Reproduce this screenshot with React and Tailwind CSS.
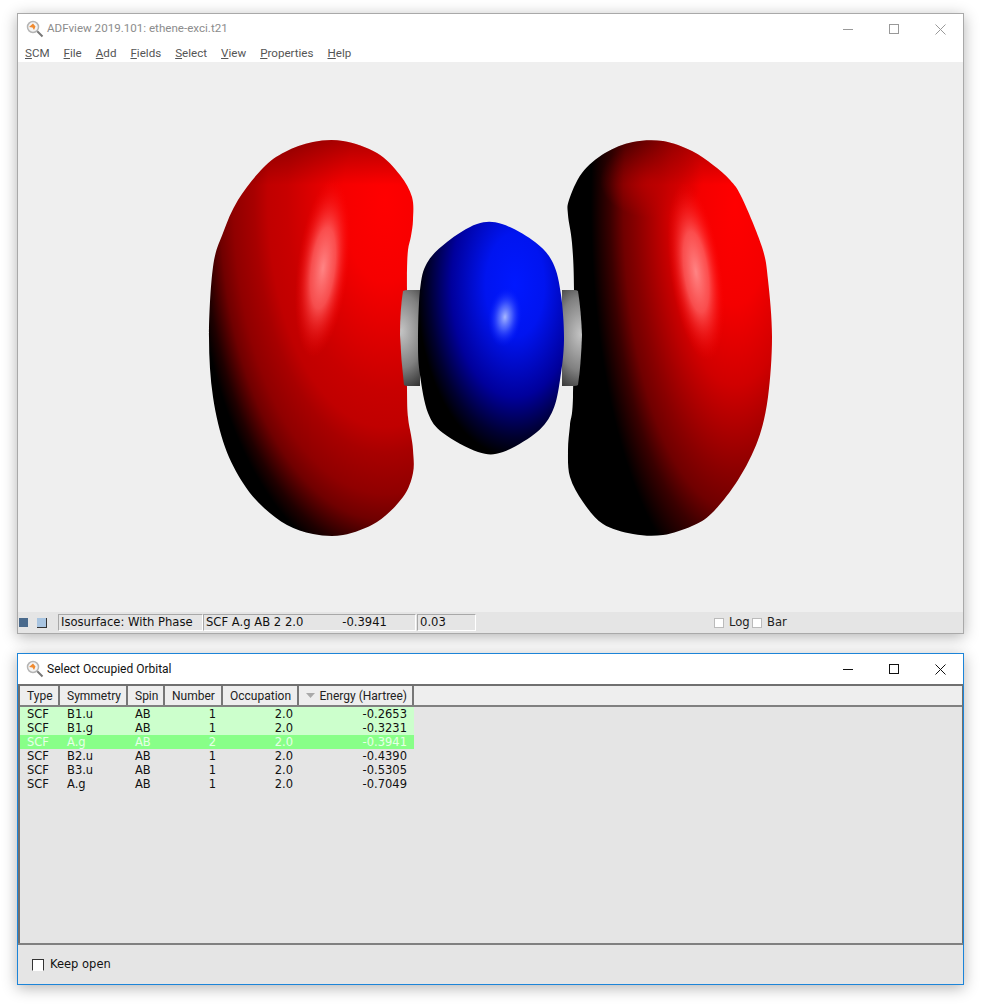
const MENU = ["SCM", "File", "Add", "Fields", "Select", "View", "Properties", "Help"];
const COLUMNS = ["Type", "Symmetry", "Spin", "Number", "Occupation", "Energy (Hartree)"];
const ROWS = [
  ["SCF", "B1.u", "AB", "1", "2.0", "-0.2653", "bg-[#ccffcc] text-[#111]"],
  ["SCF", "B1.g", "AB", "1", "2.0", "-0.3231", "bg-[#ccffcc] text-[#111]"],
  ["SCF", "A.g", "AB", "2", "2.0", "-0.3941", "bg-[#88ff88] text-[#e8ffe8]"],
  ["SCF", "B2.u", "AB", "1", "2.0", "-0.4390", "text-[#111]"],
  ["SCF", "B3.u", "AB", "1", "2.0", "-0.5305", "text-[#111]"],
  ["SCF", "A.g", "AB", "1", "2.0", "-0.7049", "text-[#111]"],
];

const LEFT_LOBE = [
  [313, 142], [343, 141], [377, 153], [400, 175], [412, 197], [413, 220], [411, 236], [408, 250], [407, 270], [407, 290],
  [407, 387], [408, 417], [411, 435], [413, 450], [413, 473], [403, 497], [377, 522], [343, 535], [313, 534], [287, 525],
  [263, 507], [243, 483], [225, 447], [213, 397], [209, 337], [213, 267], [223, 233], [238, 200], [263, 168], [285, 152],
];
const RIGHT_LOBE = [
  [633, 142], [663, 141], [692, 151], [713, 165], [730, 180], [742, 198], [762, 247], [768, 280], [772, 337], [768, 397],
  [758, 440], [738, 480], [712, 513], [692, 526], [663, 535], [633, 534], [603, 524], [583, 502], [570, 477], [568, 450],
  [570, 425], [573, 397], [574, 290], [572, 243], [568, 215], [569, 200], [582, 173], [605, 153],
];
const BLUE_LOBE = [
  [477, 224], [502, 224], [535, 242], [553, 263], [561, 295], [564, 340], [560, 380], [553, 410], [537, 432], [503, 452],
  [478, 452], [443, 433], [428, 413], [420, 375], [418, 343], [420, 290], [427, 263], [447, 242],
];

// catmull-rom through the outline points, so the lobes don't look cut from a polygon
const smoothPath = (pts) => {
  const n = pts.length;
  let d = `M${pts[0][0]} ${pts[0][1]}`;
  for (let i = 0; i < n; i++) {
    const p0 = pts[(i - 1 + n) % n];
    const p1 = pts[i];
    const p2 = pts[(i + 1) % n];
    const p3 = pts[(i + 2) % n];
    const c1x = p1[0] + (p2[0] - p0[0]) / 6;
    const c1y = p1[1] + (p2[1] - p0[1]) / 6;
    const c2x = p2[0] - (p3[0] - p1[0]) / 6;
    const c2y = p2[1] - (p3[1] - p1[1]) / 6;
    d += ` C${c1x} ${c1y} ${c2x} ${c2y} ${p2[0]} ${p2[1]}`;
  }
  return d + " Z";
};

function Magnifier() {
  return (
    <svg width="18" height="18" viewBox="0 0 18 18" className="shrink-0">
      <line x1="11" y1="11" x2="16.5" y2="16.5" stroke="#777" strokeWidth="2" />
      <circle cx="7" cy="7" r="5.5" fill="#f4f4f4" stroke="#b5b5b5" strokeWidth="1.5" />
      <path d="M3 7 L7 3.5 L9.5 6.5 L8 10 L6.5 7.5 Z" fill="#f08a30" />
    </svg>
  );
}

function CaptionButtons({ color }) {
  return (
    <div className="ml-auto flex h-full">
      <div className="flex w-[46px] items-center justify-center">
        <svg width="10" height="10" viewBox="0 0 10 10">
          <line x1="0" y1="5.5" x2="10" y2="5.5" stroke={color} />
        </svg>
      </div>
      <div className="flex w-[46px] items-center justify-center">
        <svg width="10" height="10" viewBox="0 0 10 10">
          <rect x="0.5" y="0.5" width="9" height="9" fill="none" stroke={color} />
        </svg>
      </div>
      <div className="flex w-[46px] items-center justify-center">
        <svg width="11" height="11" viewBox="0 0 11 11">
          <path d="M0.5 0.5 L10.5 10.5 M10.5 0.5 L0.5 10.5" fill="none" stroke={color} />
        </svg>
      </div>
    </div>
  );
}

function Orbital() {
  return (
    <svg viewBox="18 62 945 550" className="block h-[550px] w-[945px] bg-[#efefef]">
      <defs>
        <radialGradient id="redL" gradientUnits="userSpaceOnUse" cx="0" cy="0" r="1" gradientTransform="translate(385 200) scale(192 372)">
          <stop offset="0" stopColor="#ff0000" />
          <stop offset="0.22" stopColor="#f60000" />
          <stop offset="0.51" stopColor="#c80000" />
          <stop offset="0.61" stopColor="#c00000" />
          <stop offset="0.68" stopColor="#a80000" />
          <stop offset="0.79" stopColor="#900000" />
          <stop offset="0.86" stopColor="#700000" />
          <stop offset="0.95" stopColor="#200000" />
          <stop offset="1" stopColor="#000000" />
        </radialGradient>
        <radialGradient id="redR" gradientUnits="userSpaceOnUse" cx="0" cy="0" r="1" gradientTransform="translate(735 205) scale(147 400)">
          <stop offset="0" stopColor="#ff0000" />
          <stop offset="0.25" stopColor="#f40000" />
          <stop offset="0.45" stopColor="#d00000" />
          <stop offset="0.67" stopColor="#8a0000" />
          <stop offset="0.76" stopColor="#700000" />
          <stop offset="0.85" stopColor="#3a0000" />
          <stop offset="0.98" stopColor="#000000" />
        </radialGradient>
        <linearGradient id="topShade" gradientUnits="userSpaceOnUse" x1="0" y1="141" x2="0" y2="185">
          <stop offset="0" stopColor="#000000" stopOpacity="0.28" />
          <stop offset="1" stopColor="#000000" stopOpacity="0" />
        </linearGradient>
        <radialGradient id="redTop">
          <stop offset="0" stopColor="#c00000" stopOpacity="0.75" />
          <stop offset="1" stopColor="#c00000" stopOpacity="0" />
        </radialGradient>
        <radialGradient id="blue" gradientUnits="userSpaceOnUse" cx="0" cy="0" r="1" gradientTransform="translate(515 285) scale(98 172)">
          <stop offset="0" stopColor="#0018ff" />
          <stop offset="0.3" stopColor="#0014f0" />
          <stop offset="0.65" stopColor="#00009c" />
          <stop offset="0.88" stopColor="#000030" />
          <stop offset="1" stopColor="#000000" />
        </radialGradient>
        <radialGradient id="bondL" gradientUnits="userSpaceOnUse" cx="0" cy="0" r="1" gradientTransform="translate(401 331) scale(38 62)">
          <stop offset="0" stopColor="#c4c4c4" />
          <stop offset="0.6" stopColor="#808080" />
          <stop offset="1" stopColor="#333333" />
        </radialGradient>
        <radialGradient id="bondR" gradientUnits="userSpaceOnUse" cx="0" cy="0" r="1" gradientTransform="translate(581 334) scale(38 62)">
          <stop offset="0" stopColor="#c4c4c4" />
          <stop offset="0.6" stopColor="#808080" />
          <stop offset="1" stopColor="#333333" />
        </radialGradient>
        <radialGradient id="shine">
          <stop offset="0" stopColor="#ff8484" />
          <stop offset="0.45" stopColor="#ff6060" stopOpacity="0.8" />
          <stop offset="1" stopColor="#ff0000" stopOpacity="0" />
        </radialGradient>
        <radialGradient id="shineBlue">
          <stop offset="0" stopColor="#a8b8ff" />
          <stop offset="0.4" stopColor="#5870ff" stopOpacity="0.8" />
          <stop offset="1" stopColor="#0018ff" stopOpacity="0" />
        </radialGradient>
      </defs>

      <path d={smoothPath(LEFT_LOBE)} fill="url(#redL)" />
      <path d={smoothPath(LEFT_LOBE)} fill="url(#topShade)" />
      <ellipse cx="323" cy="268" rx="26" ry="90" fill="url(#shine)" transform="rotate(7 323 268)" />
      <path d={smoothPath(RIGHT_LOBE)} fill="url(#redR)" />
      <ellipse cx="652" cy="180" rx="52" ry="38" fill="url(#redTop)" />
      <path d={smoothPath(RIGHT_LOBE)} fill="url(#topShade)" />
      <ellipse cx="696" cy="272" rx="26" ry="90" fill="url(#shine)" transform="rotate(-8 696 272)" />

      <path d="M403 291 Q405 290 408 290 L420 290 L420 386 L408 386 Q405 386 404 385 Q401 360 400 335 Q400 310 403 291 Z" fill="url(#bondL)" />
      <path d="M562 290 L574 290 Q577 290 578 291 Q581 310 582 335 Q581 365 578 385 Q577 386 574 386 L562 386 Z" fill="url(#bondR)" />

      <path d={smoothPath(BLUE_LOBE)} fill="url(#blue)" />
      <ellipse cx="505" cy="317" rx="17" ry="30" fill="url(#shineBlue)" transform="rotate(6 505 317)" />
    </svg>
  );
}

function StatusField({ className, children }) {
  return (
    <div className={`flex h-[17px] items-center border border-t-[#a8a8a8] border-l-[#a8a8a8] border-r-white border-b-white pl-[2px] pt-[1px] ${className}`}>
      {children}
    </div>
  );
}

function StatusBar() {
  return (
    <div className="flex h-[21px] items-center bg-[#e5e5e5] font-['DejaVu_Sans',sans-serif] text-[11.6px] text-[#111]">
      <div className="ml-[1px] h-[9px] w-[9px] bg-[#4a6a8c]" />
      <div className="ml-[9px] h-[10px] w-[10px] border-r border-b border-[#333] bg-[#a8c4e0]" />
      <StatusField className="ml-[11px] w-[145px]">Isosurface: With Phase</StatusField>
      <StatusField className="w-[213px] justify-between pr-[28px]">
        <span>SCF A.g AB 2 2.0</span>
        <span>-0.3941</span>
      </StatusField>
      <StatusField className="ml-[1px] w-[59px]">0.03</StatusField>
      <div className="ml-[238px] h-[10px] w-[10px] border border-[#bbb] bg-white" />
      <span className="ml-[5px] w-[23px] pt-[1px] text-[#222]">Log</span>
      <div className="h-[10px] w-[10px] border border-[#bbb] bg-white" />
      <span className="ml-[5px] pt-[1px] text-[#222]">Bar</span>
    </div>
  );
}

function OrbitalTable() {
  return (
    <div className="flex h-[259px] flex-col border-2 border-r-1 border-b-0 border-[#707070] bg-[#e5e5e5]">
      <div className="flex h-[21px] border-b-2 border-[#808080] bg-[#eeeeee] font-['Roboto',sans-serif] text-[12px] text-[#222]">
        <div className="grid w-[394px] grid-cols-[40px_68px_37px_58px_76px_115px]">
          {COLUMNS.map((col, idx) => (
            <div
              key={col}
              className={`flex items-center border-r-2 border-[#777] pl-[7px] pr-[5px] ${idx === 5 ? "justify-between" : ""}`}
            >
              {idx === 5 && (
                <svg width="9" height="5" viewBox="0 0 9 5">
                  <path d="M0 0 L9 0 L4.5 5 Z" fill="#aaa" />
                </svg>
              )}
              {col}
            </div>
          ))}
        </div>
      </div>
      <div className="w-[394px] font-['DejaVu_Sans',sans-serif] text-[11.5px] leading-[14px]">
        {ROWS.map((row) => (
          <div key={row[5]} className={`grid h-[14px] grid-cols-[40px_68px_37px_58px_76px_115px] ${row[6]}`}>
            <span className="pl-[7px]">{row[0]}</span>
            <span className="pl-[7px]">{row[1]}</span>
            <span className="pl-[7px]">{row[2]}</span>
            <span className="pr-[7px] text-right">{row[3]}</span>
            <span className="pr-[6px] text-right">{row[4]}</span>
            <span className="pr-[7px] text-right">{row[5]}</span>
          </div>
        ))}
      </div>
    </div>
  );
}

export default function App() {
  return (
    <div className="h-[1007px] w-[985px] overflow-hidden bg-white pt-[13px] pl-[17px] font-['Roboto',sans-serif]">
      <div className="h-[621px] w-[947px] border border-[#a9a9a9] bg-white shadow-[0_3px_14px_rgba(0,0,0,0.3)]">
        <div className="flex h-[30px] items-center pl-[8px] text-[11.6px] text-[#8c8c8c]">
          <Magnifier />
          <span className="ml-[3px]">ADFview 2019.101: ethene-exci.t21</span>
          <CaptionButtons color="#999999" />
        </div>
        <div className="flex h-[18px] items-center gap-[14px] pt-[2px] pl-[7px] text-[11.6px] text-[#555]">
          {MENU.map((item) => (
            <span key={item}>
              <span className="underline">{item[0]}</span>
              {item.slice(1)}
            </span>
          ))}
        </div>
        <Orbital />
        <StatusBar />
      </div>

      <div className="mt-[19px] h-[332px] w-[947px] border border-[#1c84d8] bg-[#e5e5e5] shadow-[0_3px_14px_rgba(0,0,0,0.3)]">
        <div className="flex h-[30px] items-center bg-white pl-[8px] text-[12px] text-[#111]">
          <Magnifier />
          <span className="ml-[3px]">Select Occupied Orbital</span>
          <CaptionButtons color="#111111" />
        </div>
        <OrbitalTable />
        <div className="flex h-[41px] items-center border-t-2 border-[#808080] pl-[14px] font-['DejaVu_Sans',sans-serif] text-[11.5px] text-[#111]">
          <div className="h-[12px] w-[12px] border border-t-[#333] border-l-[#333] border-r-[#333] border-b-white bg-white" />
          <span className="ml-[6px] pt-[1px]">Keep open</span>
        </div>
      </div>
    </div>
  );
}
